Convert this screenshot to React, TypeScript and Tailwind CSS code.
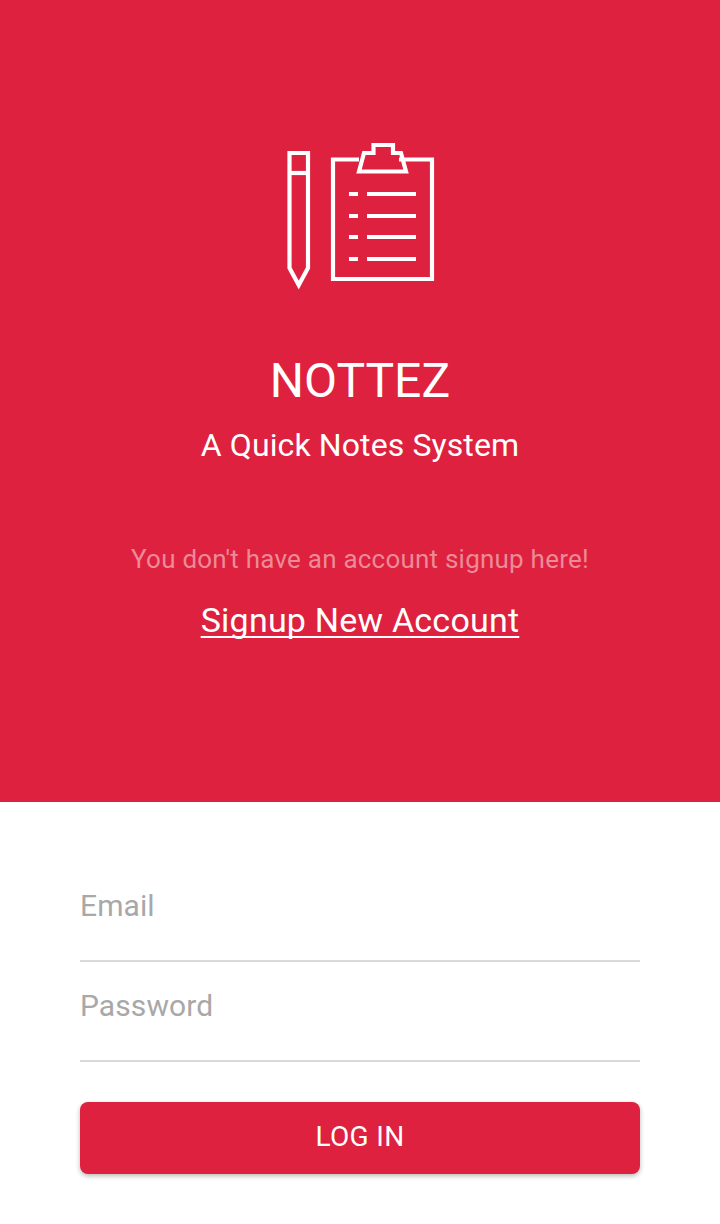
export default function App() {
  return (
    <div className="w-[720px] h-[1224px] bg-white font-['Roboto',sans-serif] overflow-hidden">
      <div className="h-[802px] bg-[#dd213e] flex flex-col items-center pt-[140px] text-white">
        <svg width="160" height="152" viewBox="0 0 160 152" fill="none" stroke="#fff" strokeWidth="4.2" strokeLinejoin="miter">
          <path d="M9.5 13H28V128L18.75 145L9.5 128Z" />
          <path d="M9.5 33H28" />
          <path d="M79 19.5H53V139H152V19.5H119" />
          <path d="M79 31.5L84 13H93.5V5H113V13H121L126 31.5Z" />
          <path d="M69 54H78M87 54H136M69 76H78M87 76H136M69 97H78M87 97H136M69 119H78M87 119H136" />
        </svg>
        <h1 className="mt-[61px] text-[48px] leading-[56px] font-normal">NOTTEZ</h1>
        <p className="mt-[15px] text-[32px] leading-[42px] tracking-[0.1px]">A Quick Notes System</p>
        <p className="mt-[76px] text-[26px] leading-[34px] tracking-[0.22px] text-[#ee8a98]">You don't have an account signup here!</p>
        <a className="mt-[22px] text-[34px] leading-[44px] tracking-[0.22px] underline decoration-2 underline-offset-[4px] [text-decoration-skip-ink:none]">Signup New Account</a>
      </div>
      <div className="px-[80px] pt-[81px] flex flex-col">
        <div className="h-[79px] border-b-2 border-[#d9d9d9] text-[30px] leading-[46px] tracking-[0.1px] text-[#a8a8a8]">Email</div>
        <div className="h-[100px] pt-[21px] border-b-2 border-[#d9d9d9] text-[30px] leading-[46px] tracking-[0.1px] text-[#a8a8a8]">Password</div>
        <button className="mt-[40px] h-[72px] pb-[2px] rounded-[8px] bg-[#dd213e] text-white text-[28px] tracking-[0.3px] shadow-[0_2px_5px_rgba(0,0,0,0.28)]">LOG IN</button>
      </div>
    </div>
  );
}
